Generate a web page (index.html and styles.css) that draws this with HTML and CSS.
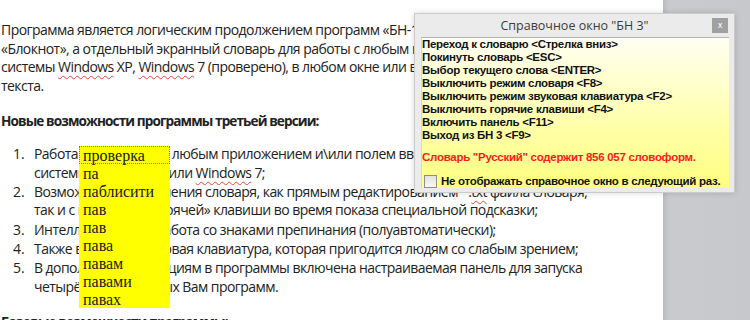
FILE: index.html
```html
<!DOCTYPE html>
<html lang="ru">
<head>
    <meta charset="UTF-8">
    <title>БН 3 — справочное окно</title>
    <link rel="stylesheet" href="styles.css">
</head>
<body>
    <div class="workspace">
        <div class="page">
            <p class="intro">
                Программа является логическим продолжением программ «БН-1» и «БН-2», а также<br>
                «Блокнот», а отдельный экранный словарь для работы с любым приложением операционной<br>
                системы <span class="typo">Windows</span> XP, <span class="typo">Windows</span> 7 (проверено), в любом окне или в любом поле ввода<br>
                текста.
            </p>

            <h3 class="heading">Новые возможности программы третьей версии:</h3>

            <ol class="features">
                <li><span class="num">1.</span><span class="text">Работа со словарём с любым приложением и\или полем ввода текста операционной<br>системы <span class="typo">Windows</span> XP или <span class="typo">Windows</span> 7;</span></li>
                <li><span class="num">2.</span><span class="text">Возможность пополнения словаря, как прямым редактированием *.<span class="typo">txt</span> файла словаря;<br>так и с помощью «горячей» клавиши во время показа специальной подсказки;</span></li>
                <li><span class="num">3.</span><span class="text">Интеллектуальная работа со знаками препинания (полуавтоматически);</span></li>
                <li><span class="num">4.</span><span class="text">Также встроена звуковая клавиатура, которая пригодится людям со слабым зрением;</span></li>
                <li><span class="num">5.</span><span class="text">В дополнение к функциям в программы  включена настраиваемая панель для запуска<br>четырёх необходимых Вам программ.</span></li>
            </ol>

            <h3 class="heading">Базовые возможности программы:</h3>
        </div>
        <div class="gutter"></div>

        <!-- список подсказок словаря -->
        <ul class="suggest">
            <li class="current">проверка</li>
            <li>па</li>
            <li>паблисити</li>
            <li>пав</li>
            <li>пав</li>
            <li>пава</li>
            <li>павам</li>
            <li>павами</li>
            <li>павах</li>
        </ul>

        <!-- справочное окно -->
        <div class="helpwin">
            <div class="titlebar">
                <span></span>
                <span class="title">Справочное окно "БН 3"</span>
                <button class="close">x</button>
            </div>
            <div class="helpbody">
                <div class="keys">
                    <div>Переход к словарю &lt;Стрелка вниз&gt;</div>
                    <div>Покинуть словарь &lt;ESC&gt;</div>
                    <div>Выбор текущего слова &lt;ENTER&gt;</div>
                    <div>Выключить режим словаря &lt;F8&gt;</div>
                    <div>Выключить режим звуковая клавиатура &lt;F2&gt;</div>
                    <div>Выключить горячие клавиши &lt;F4&gt;</div>
                    <div>Включить панель &lt;F11&gt;</div>
                    <div>Выход из БН 3 &lt;F9&gt;</div>
                </div>
                <div class="stats">Словарь "Русский" содержит 856 057 словоформ.</div>
                <label class="dontshow"><span class="box"></span>Не отображать справочное окно в следующий раз.</label>
            </div>
        </div>
    </div>
</body>
</html>
```

FILE: styles.css
```css
body {
    margin: 0;
    background: #ffffff;
    overflow: hidden;
}

.workspace {
    position: relative;
    display: flex;
    width: 750px;
    height: 320px;
    overflow: hidden;
}

.page {
    flex: none;
    width: 663px;
    box-sizing: border-box;
    padding: 21px 0 0 1px;
    overflow: hidden;
    background: #ffffff;
    color: #222222;
    font-family: "Open Sans", "Noto Sans", sans-serif;
    font-size: 14px;
    letter-spacing: -0.55px;
    line-height: 18.6px;
    white-space: nowrap;
}

.gutter {
    flex: 1;
    background: linear-gradient(90deg, #b9bbbe, #c8cacd 6px, #c6c8cb);
}

.intro {
    margin: 0;
}

.heading {
    margin: 17px 0 0;
    font-size: 13.6px;
    font-weight: bold;
    letter-spacing: -0.9px;
}

.features {
    margin: 14px 0 8px;
    padding: 0;
    list-style: none;
}

.features li {
    display: flex;
}

.features li + li {
    margin-top: 0.6px;
}

.num {
    flex: none;
    width: 33px;
    box-sizing: border-box;
    padding-left: 12px;
    letter-spacing: 0;
}

.typo {
    text-decoration: underline wavy #e0463c;
    text-decoration-thickness: 1px;
    text-underline-offset: 3px;
}

.suggest {
    position: absolute;
    left: 79px;
    top: 146px;
    width: 91px;
    margin: 0;
    padding: 0;
    list-style: none;
    background: #ffff00;
    color: #1a1a1a;
    font-family: "Liberation Serif", serif;
    font-size: 16px;
    line-height: 18px;
}

.suggest li {
    padding-left: 3px;
    border: 1px solid transparent;
    height: 16px;
}

.suggest li.current {
    border: 1px dotted #7a7a7a;
}

.helpwin {
    position: absolute;
    left: 414px;
    top: 13px;
    width: 321px;
    height: 180px;
    box-sizing: border-box;
    display: flex;
    flex-direction: column;
    background: #ebebeb;
    border: 1px solid #cbcbcb;
    box-shadow: 0 0 6px rgba(0, 0, 0, 0.15);
}

.titlebar {
    display: grid;
    grid-template-columns: 1fr auto 1fr;
    align-items: center;
    height: 24px;
}

.title {
    font-family: "Open Sans", "Noto Sans", sans-serif;
    font-size: 12.5px;
    color: #3c3c3c;
}

.close {
    justify-self: end;
    width: 16px;
    height: 15px;
    margin-right: 6px;
    padding: 0;
    border: none;
    background: #a0a0a0;
    color: #ffffff;
    font-family: "DejaVu Sans", sans-serif;
    font-size: 8px;
    line-height: 15px;
    cursor: pointer;
}

.helpbody {
    flex: 1;
    margin: 0 5px 4px 6px;
    border-top: 1px solid #b4b4b4;
    border-left: 1px solid #d8d8d8;
    background: linear-gradient(#fffff2, #ffffa8 60%, #ffff80);
    font-family: "Liberation Sans", Arial, sans-serif;
    font-size: 11.5px;
    font-weight: bold;
    letter-spacing: -0.28px;
    line-height: 13px;
    color: #111111;
    white-space: nowrap;
}

.stats {
    margin-top: 9px;
    color: #ff1a1a;
}

.dontshow {
    display: flex;
    align-items: center;
    margin-top: 11px;
    padding-left: 2px;
}

.box {
    width: 11px;
    height: 11px;
    margin-right: 4px;
    border: 1px solid #8e8e8e;
    background: linear-gradient(#e2e2e2, #f8f8f8);
}
```
